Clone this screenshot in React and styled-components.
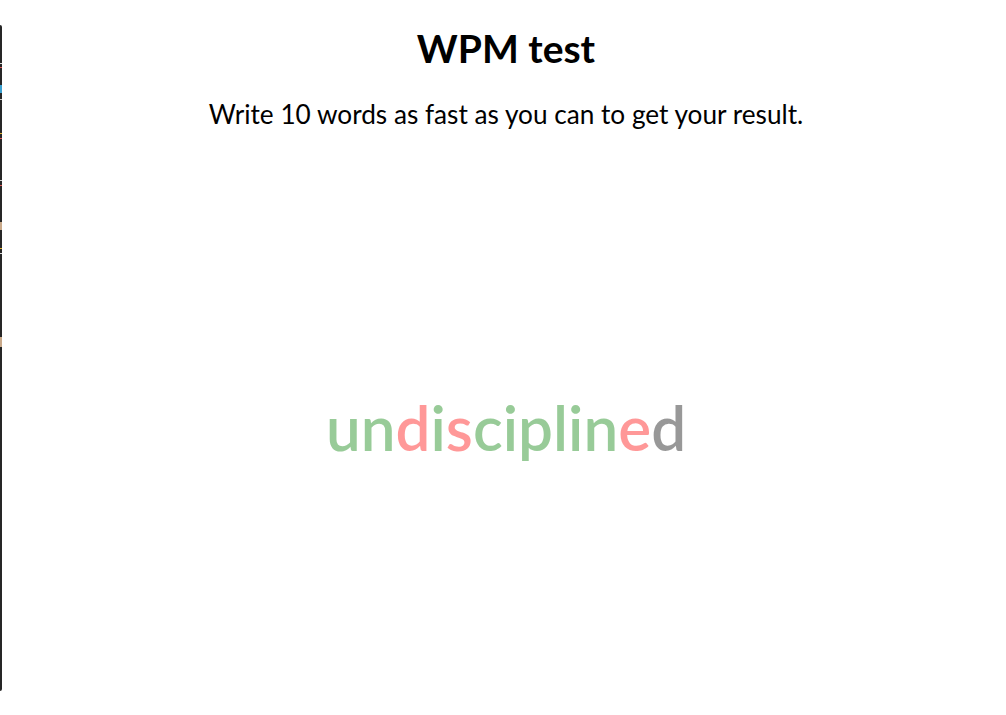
import React from "react";
import styled, { createGlobalStyle } from "styled-components";

const Global = createGlobalStyle`
  html, body { margin: 0; padding: 0; background: #fff; }
  body { font-family: Lato, "Open Sans", sans-serif; color: #000; }
`;

const Page = styled.div`
  display: flex;
  height: 715px;
  width: 1006px;
  overflow: hidden;
`;

const Edge = styled.div`
  position: relative;
  flex: 0 0 2px;
  margin: 25px 0 24px 0;
  background: #262626;
  border-radius: 0 2px 2px 0;
`;

const Mark = styled.span`
  position: absolute;
  left: 0;
  width: 2px;
  top: ${(p) => p.$top}px;
  height: ${(p) => p.$h}px;
  background: ${(p) => p.$c};
`;

const Main = styled.main`
  flex: 1;
  display: flex;
  flex-direction: column;
  align-items: center;
  padding-left: 4px;
`;

const Title = styled.h1`
  margin: 24px 0 0;
  font-size: 39px;
  font-weight: 700;
  line-height: 48px;
`;

const Subtitle = styled.p`
  margin: 26px 0 0;
  font-size: 26.2px;
  line-height: 32px;
`;

const Stage = styled.div`
  flex: 1;
  display: flex;
  align-items: center;
  justify-content: center;
  padding-top: 8px;
`;

const Word = styled.div`
  font-size: 62px;
  font-weight: 600;
  opacity: 0.4;
`;

const colors = { ok: "green", bad: "red", todo: "black" };

const Letter = styled.span`
  color: ${(p) => colors[p.$state]};
`;

const letters = [
  ["u", "ok"], ["n", "ok"], ["d", "bad"], ["i", "ok"], ["s", "bad"],
  ["c", "ok"], ["i", "ok"], ["p", "ok"], ["l", "ok"], ["i", "ok"],
  ["n", "ok"], ["e", "bad"], ["d", "todo"],
];

const marks = [
  [38, 1, "#ddd"], [42, 1, "#e05a5a"], [60, 8, "#3aa0d0"], [74, 1, "#ccc"],
  [108, 1, "#e0b030"], [113, 1, "#e05a5a"], [155, 1, "#ccc"], [160, 1, "#e05a5a"],
  [197, 8, "#c9a98a"], [223, 1, "#e0b030"], [228, 1, "#ddd"], [312, 10, "#c9a98a"],
];

export default function App() {
  return (
    <>
      <Global />
      <Page>
        <Edge>
          {marks.map(([t, h, c], i) => (
            <Mark key={i} $top={t} $h={h} $c={c} />
          ))}
        </Edge>
        <Main>
          <Title>WPM test</Title>
          <Subtitle>Write 10 words as fast as you can to get your result.</Subtitle>
          <Stage>
            <Word>
              {letters.map(([ch, s], i) => (
                <Letter key={i} $state={s}>{ch}</Letter>
              ))}
            </Word>
          </Stage>
        </Main>
      </Page>
    </>
  );
}
